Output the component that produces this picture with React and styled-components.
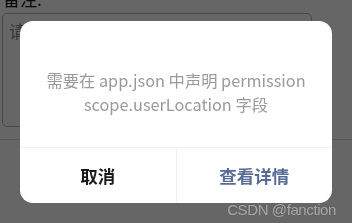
import React from "react";
import styled, { createGlobalStyle } from "styled-components";

const Global = createGlobalStyle`
  html, body {
    margin: 0;
    padding: 0;
    background: #fff;
    overflow: hidden;
  }
  body {
    font-family: "Noto Sans CJK SC", "Noto Sans", sans-serif;
  }
`;

const Page = styled.div`
  width: 352px;
  height: 223px;
  box-sizing: border-box;
  padding: 0 40px 0 2px;
  overflow: hidden;
`;

const Label = styled.div`
  margin-top: -14px;
  height: 27px;
  font-size: 17px;
  line-height: 25px;
  color: #111;
  padding-left: 1px;
`;

const Field = styled.div`
  height: 114px;
  box-sizing: border-box;
  border: 1px solid #b5b5b5;
  border-radius: 5px;
  padding: 6px 6px;
  font-size: 17px;
  line-height: 22px;
  color: #888;
`;

const Rule = styled.div`
  margin: 12px -40px 0 -2px;
  border-top: 1px solid #d6d6d6;
`;

const Overlay = styled.div`
  position: fixed;
  inset: 0;
  background: rgba(0, 0, 0, 0.6);
  display: flex;
  align-items: center;
  justify-content: center;
`;

const Modal = styled.div`
  width: 312px;
  background: #fff;
  border-radius: 13px;
  overflow: hidden;
`;

const Body = styled.div`
  padding: 47px 16px 31px;
  text-align: center;
  font-size: 16.3px;
  line-height: 24px;
  color: #9a9a9a;
`;

const Footer = styled.div`
  display: flex;
  border-top: 1px solid #f0f0f0;
  height: 55px;
`;

const Button = styled.div`
  flex: 1;
  display: flex;
  align-items: center;
  justify-content: center;
  font-size: 17.5px;
  font-weight: 700;
  color: ${(p) => (p.primary ? "#576b95" : "#1a1a1a")};
  & + & {
    border-left: 1px solid #f0f0f0;
  }
`;

const Watermark = styled.div`
  position: fixed;
  right: 16px;
  bottom: 5px;
  font-family: "Liberation Sans", Arial, sans-serif;
  font-size: 15px;
  color: rgba(255, 255, 255, 0.5);
  text-shadow: 0 0 1px rgba(0, 0, 0, 0.3);
  letter-spacing: -0.4px;
`;

export default function App() {
  return (
    <>
      <Global />
      <Page>
        <Label>备注:</Label>
        <Field>请输入备注</Field>
        <Rule />
      </Page>
      <Overlay>
        <Modal>
          <Body>
            需要在 app.json 中声明 permission
            <br />
            scope.userLocation 字段
          </Body>
          <Footer>
            <Button>取消</Button>
            <Button primary>查看详情</Button>
          </Footer>
        </Modal>
      </Overlay>
      <Watermark>CSDN @fanction</Watermark>
    </>
  );
}
